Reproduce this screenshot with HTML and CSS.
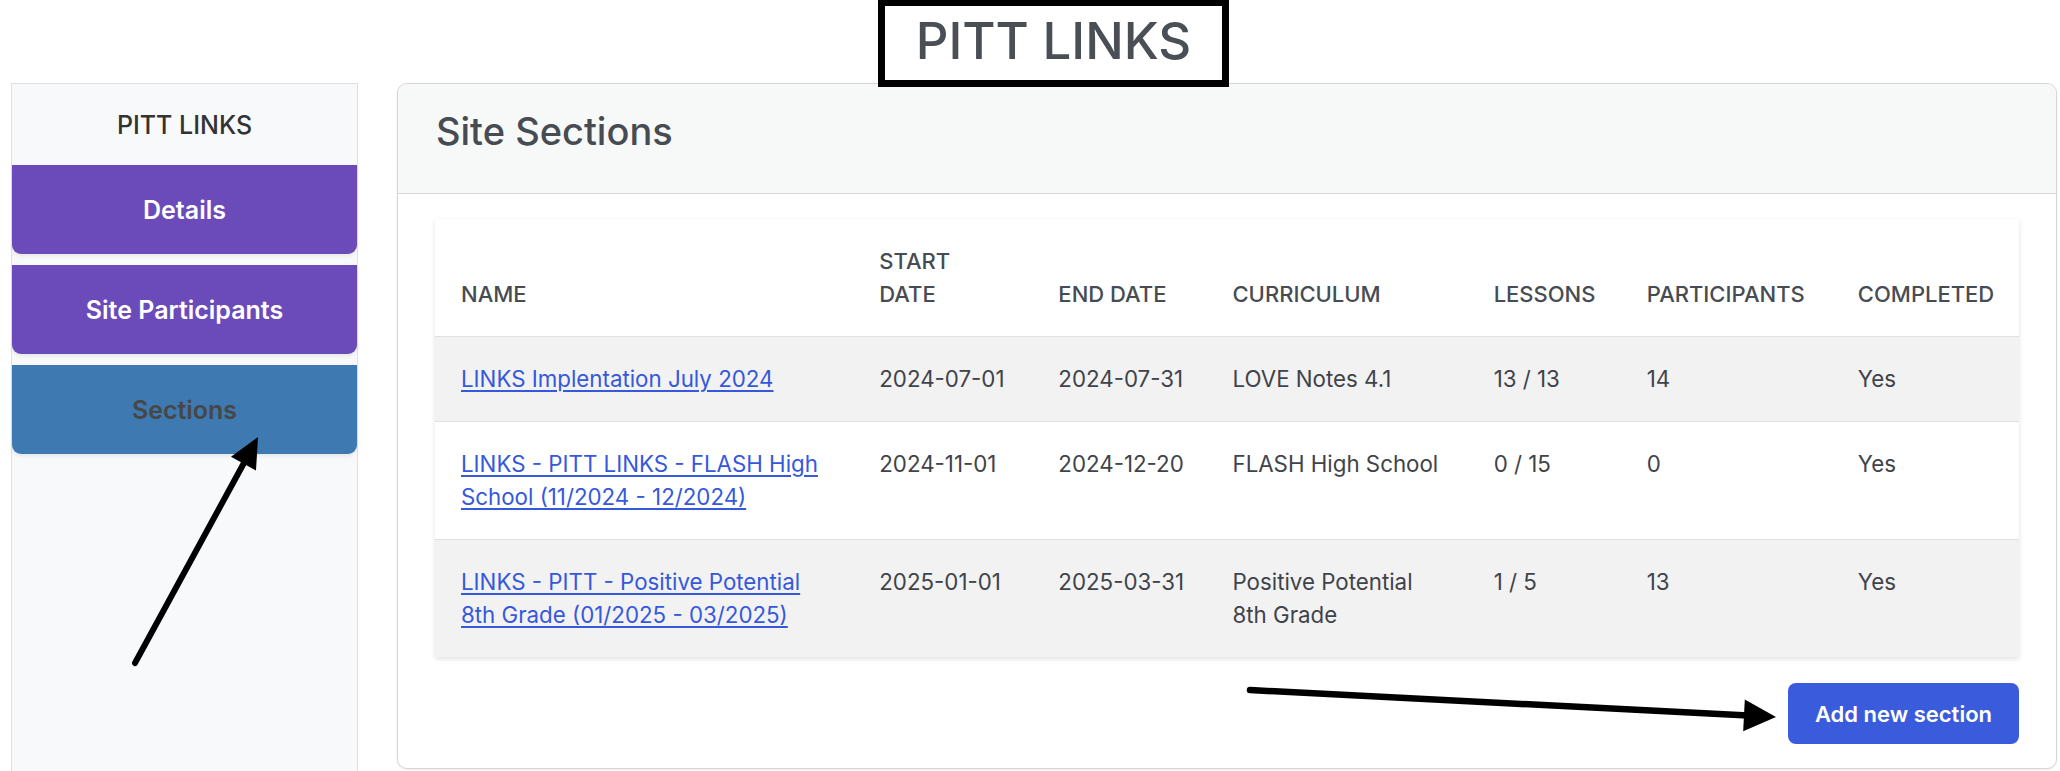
FILE: index.html
```html
<!DOCTYPE html>
<html lang="en">
<head>
<meta charset="utf-8">
<title>PITT LINKS - Site Sections</title>
<link rel="stylesheet" href="styles.css">
</head>
<body>
<div class="page">
  <aside class="sidebar">
    <div class="sidebar-title">PITT LINKS</div>
    <nav class="side-nav">
      <a class="side-btn" href="#">Details</a>
      <a class="side-btn" href="#">Site Participants</a>
      <a class="side-btn active" href="#">Sections</a>
    </nav>
  </aside>
  <main class="card">
    <div class="card-header"><h2>Site Sections</h2></div>
    <div class="card-body">
      <table class="sections-table">
        <colgroup>
          <col class="c-name"><col class="c-start"><col class="c-end"><col class="c-curr"><col class="c-less"><col class="c-part"><col class="c-comp">
        </colgroup>
        <thead>
          <tr>
            <th>NAME</th>
            <th class="wrap">START DATE</th>
            <th>END DATE</th>
            <th>CURRICULUM</th>
            <th>LESSONS</th>
            <th>PARTICIPANTS</th>
            <th>COMPLETED</th>
          </tr>
        </thead>
        <tbody>
          <tr>
            <td><a href="#">LINKS Implentation July 2024</a></td>
            <td>2024-07-01</td>
            <td>2024-07-31</td>
            <td>LOVE Notes 4.1</td>
            <td>13 / 13</td>
            <td>14</td>
            <td>Yes</td>
          </tr>
          <tr>
            <td><a href="#">LINKS - PITT LINKS - FLASH High<br>School (11/2024 - 12/2024)</a></td>
            <td>2024-11-01</td>
            <td>2024-12-20</td>
            <td>FLASH High School</td>
            <td>0 / 15</td>
            <td>0</td>
            <td>Yes</td>
          </tr>
          <tr>
            <td><a href="#">LINKS - PITT - Positive Potential<br>8th Grade (01/2025 - 03/2025)</a></td>
            <td>2025-01-01</td>
            <td>2025-03-31</td>
            <td>Positive Potential<br>8th Grade</td>
            <td>1 / 5</td>
            <td>13</td>
            <td>Yes</td>
          </tr>
        </tbody>
      </table>
      <div class="actions">
        <button class="btn-add" type="button">Add new section</button>
      </div>
    </div>
  </main>
</div>

<div class="title-box">PITT LINKS</div>

<svg class="annotations" width="2060" height="771" viewBox="0 0 2060 771" aria-hidden="true">
  <line x1="135" y1="663" x2="245" y2="461" stroke="#000" stroke-width="6" stroke-linecap="round"/>
  <polygon points="258,437 231,456.7 256,470.5" fill="#000"/>
  <line x1="1250" y1="690" x2="1748" y2="715.6" stroke="#000" stroke-width="6.5" stroke-linecap="round"/>
  <polygon points="1776,717 1744.8,699.6 1743.2,731.2" fill="#000"/>
</svg>
</body>
</html>
```

FILE: styles.css
```css
html, body {
  margin: 0;
  padding: 0;
  background: #ffffff;
  font-family: Inter, "Noto Sans", "Liberation Sans", sans-serif;
}

body {
  position: relative;
  width: 2060px;
  height: 771px;
  overflow: hidden;
}

.page {
  display: flex;
  align-items: flex-start;
  gap: 39px;
  padding: 83px 3px 0 11px;
  height: 771px;
  box-sizing: border-box;
}

/* Sidebar */
.sidebar {
  flex: none;
  width: 347px;
  align-self: stretch;
  box-sizing: border-box;
  background: #f8f9fa;
  border: 1px solid #dee2e6;
  border-bottom: none;
}

.sidebar-title {
  height: 81px;
  display: flex;
  align-items: center;
  justify-content: center;
  font-size: 25px;
  font-weight: 500;
  color: #333333;
}

.side-nav {
  display: flex;
  flex-direction: column;
  gap: 11px;
}

.side-btn {
  height: 89px;
  display: flex;
  align-items: center;
  justify-content: center;
  font-size: 25px;
  font-weight: 600;
  color: #ffffff;
  background: #6a4bb9;
  border-radius: 0 0 9px 9px;
  box-shadow: 0 2px 4px rgba(0, 0, 0, 0.08);
  text-decoration: none;
}

.side-btn.active {
  background: #3e7ab1;
  color: #474747;
}

/* Card */
.card {
  flex: 1;
  background: #ffffff;
  border: 1px solid #d6d6d6;
  border-radius: 10px;
  overflow: hidden;
  box-shadow: 0 1px 2px rgba(0, 0, 0, 0.08);
}

.card-header {
  background: #f7f8f8;
  border-bottom: 1px solid #d6d6d6;
  padding: 25px 38px 39px;
}

.card-header h2 {
  margin: 0;
  font-size: 38px;
  line-height: 45px;
  font-weight: 500;
  color: #474c53;
}

.card-body {
  padding: 25px 37px 24px;
}

/* Table */
.sections-table {
  width: 100%;
  border-collapse: collapse;
  table-layout: fixed;
  background: #ffffff;
  box-shadow: 0 2px 5px rgba(0, 0, 0, 0.12);
}

.c-name { width: 418px; }
.c-start { width: 179px; }
.c-end { width: 174px; }
.c-curr { width: 261px; }
.c-less { width: 153px; }
.c-part { width: 211px; }
.c-comp { width: 187px; }

.sections-table th,
.sections-table td {
  text-align: left;
  line-height: 33px;
  white-space: nowrap;
}

.sections-table th {
  padding: 26px 26px 25px;
  font-size: 22px;
  font-weight: 500;
  color: #474c53;
  vertical-align: bottom;
}

.sections-table th.wrap {
  white-space: normal;
}

.sections-table td {
  padding: 25px 26px 26px;
  font-size: 22.3px;
  font-weight: 400;
  color: #3f434a;
  vertical-align: top;
  border-top: 1px solid #e0e0e0;
}

.sections-table tbody tr:nth-child(odd) {
  background: #f2f2f2;
}

.sections-table a {
  color: #3558dc;
  text-decoration: underline;
  text-decoration-thickness: 2px;
  text-underline-offset: 3px;
}

.actions {
  display: flex;
  justify-content: flex-end;
  margin-top: 26px;
}

.btn-add {
  height: 61px;
  padding: 0 27px;
  border: none;
  border-radius: 8px;
  background: #3a5cdc;
  color: #ffffff;
  font-family: Inter, "Noto Sans", "Liberation Sans", sans-serif;
  font-size: 22px;
  font-weight: 600;
}

/* Annotation overlays */
.title-box {
  position: absolute;
  left: 878px;
  top: 0;
  width: 351px;
  height: 87px;
  box-sizing: border-box;
  border: 7px solid #000000;
  border-top-width: 6px;
  background: #ffffff;
  display: flex;
  align-items: center;
  justify-content: center;
  padding-bottom: 6px;
  font-size: 51px;
  font-weight: 500;
  color: #4a4f56;
}

.annotations {
  position: absolute;
  left: 0;
  top: 0;
  pointer-events: none;
}
```
